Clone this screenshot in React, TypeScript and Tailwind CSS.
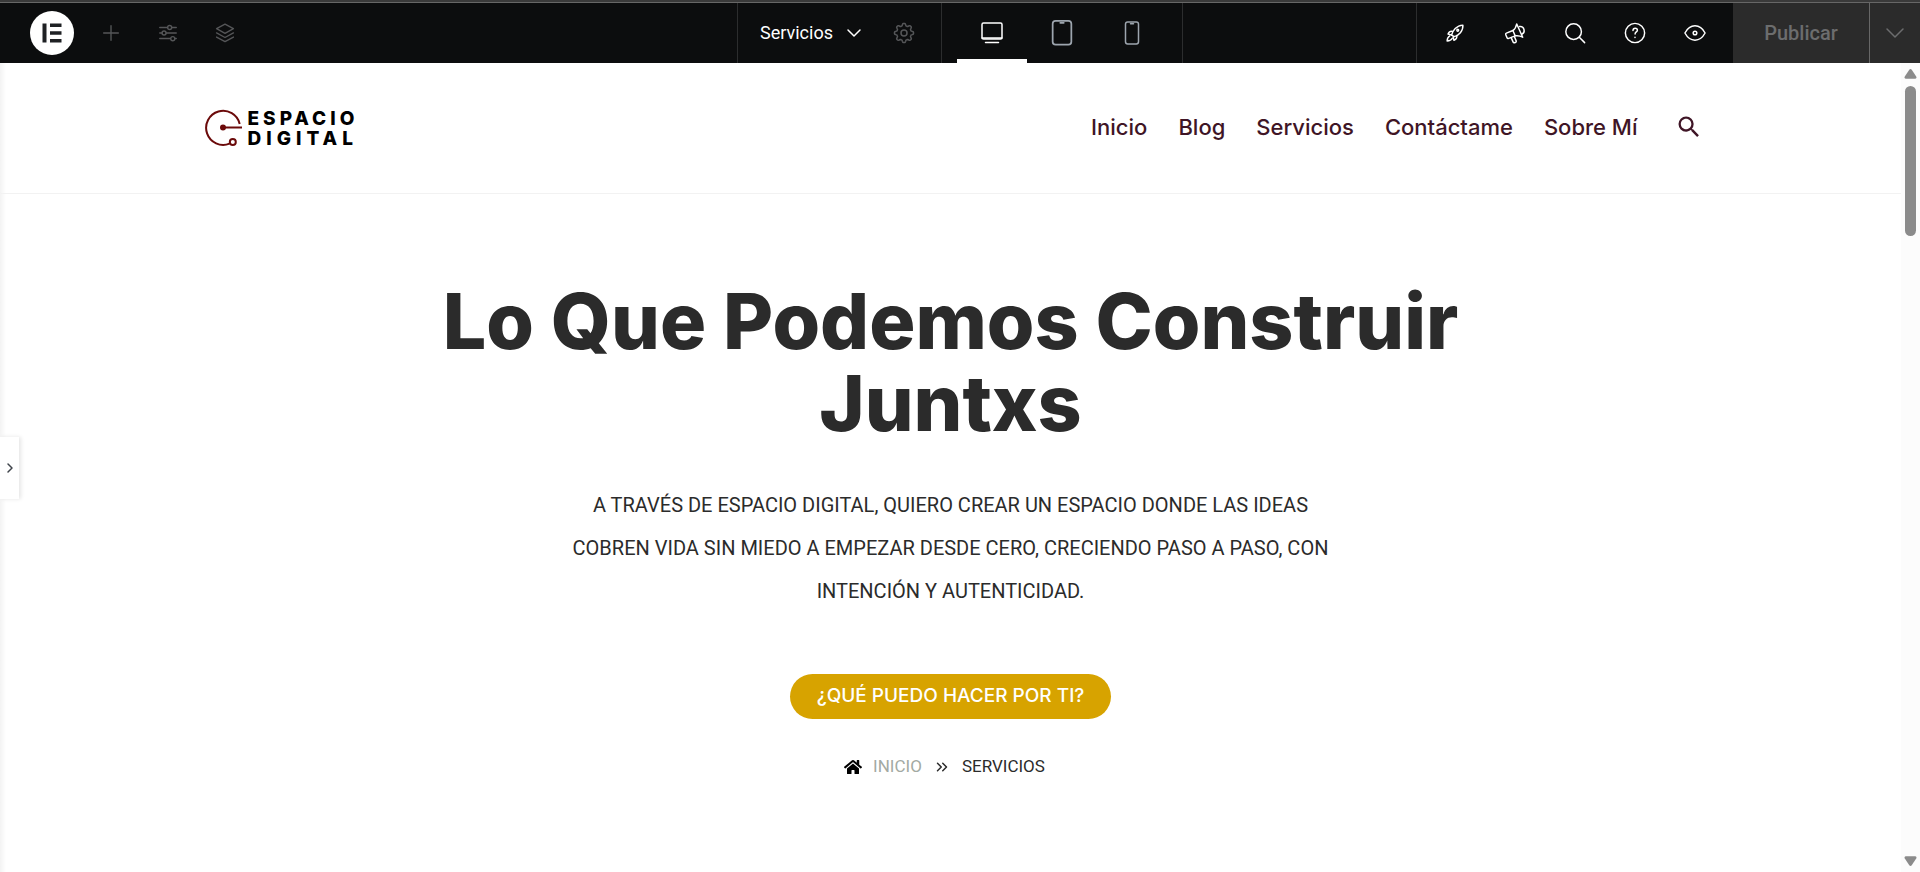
import type { ReactNode } from "react";
import { useState } from "react";
import clsx from "clsx";
import { FaHome } from "react-icons/fa";
import { FiChevronsRight } from "react-icons/fi";
import { MdSearch } from "react-icons/md";

const navLinks = ["Inicio", "Blog", "Servicios", "Contáctame", "Sobre Mí"];

function Icon({
	children,
	className,
	strokeWidth = 1.5,
}: {
	children: ReactNode;
	className?: string;
	strokeWidth?: number;
}) {
	return (
		<svg
			aria-hidden="true"
			className={clsx("shrink-0", className ?? "size-6")}
			fill="none"
			stroke="currentColor"
			strokeLinecap="round"
			strokeLinejoin="round"
			strokeWidth={strokeWidth}
			viewBox="0 0 24 24"
		>
			{children}
		</svg>
	);
}

// eight rounded teeth around the hub
const gearPath = (() => {
	const points: string[] = [];
	for (let i = 0; i < 96; i++) {
		const angle = (i / 96) * Math.PI * 2;
		const wave = Math.max(-1, Math.min(1, Math.cos(angle * 8) * 1.6));
		const radius = 8.4 + wave * 1.1;
		points.push(
			`${(12 + Math.cos(angle) * radius).toFixed(2)} ${(12 + Math.sin(angle) * radius).toFixed(2)}`,
		);
	}
	return `M${points.join("L")}Z`;
})();

const panelTools = [
	{
		label: "Añadir elemento",
		icon: <path d="M12 4v16M4 12h16" />,
	},
	{
		label: "Ajustes del sitio",
		icon: (
			<>
				<path d="M3 6h8.500M16 6h5M3 12h2.500M10 12h11M3 18h11.500M19.500 18h1.500" />
				<circle cx="13.800" cy="6" r="2.200" />
				<circle cx="7.700" cy="12" r="2.200" />
				<circle cx="17.200" cy="18.200" r="2.200" />
			</>
		),
	},
	{
		label: "Estructura",
		icon: (
			<>
				<path d="M12 2.300 2.800 7.300 12 12.300l9.200-5z" />
				<path d="m2.800 11.900 9.200 5 9.200-5" />
				<path d="m2.800 16.400 9.200 5 9.200-5" />
			</>
		),
	},
];

const devices = [
	{
		id: "desktop",
		label: "Escritorio",
		size: "size-6",
		icon: (
			<>
				<rect height="16" rx="1.500" width="20" x="2" y="2" />
				<path d="M5.500 21.500h13M2 17h20" />
			</>
		),
	},
	{
		id: "tablet",
		label: "Tableta",
		size: "size-7",
		icon: (
			<>
				<rect height="20.500" rx="2.500" width="16" x="4" y="1.500" />
				<path d="M10.500 3.300h3" />
			</>
		),
	},
	{
		id: "mobile",
		label: "Móvil",
		size: "size-6",
		icon: (
			<>
				<rect height="22" rx="2.200" width="13" x="5.500" y="1" />
				<path d="M10.500 2.800h3" />
			</>
		),
	},
];

const utilities = [
	{
		label: "Lista de lanzamiento",
		icon: (
			<>
				<path d="M8.300 14.200C9.500 9.500 13.500 3.800 20.600 3.400c.5 6.600-4.600 11.200-9.500 12.600z" />
				<path d="M9.300 10.200c-2-.4-3.900.7-4.900 3l3.900 1M13.900 14.700c.4 2-.7 4.300-3 5.300l-.9-3.700" />
				<path d="M6.300 15.200c-2 1-2.800 3-2.900 5.500 2.500 0 4.500-.9 5.600-3" />
				<circle cx="15" cy="9" r="1" />
			</>
		),
	},
	{
		label: "Novedades",
		icon: (
			<>
				<path d="M9.700 9.300 2.600 12.200c-.8.400-1 1-.7 1.700l1.500 3.400c.3.700.9.900 1.700.6l7.100-2.800z" />
				<path d="M9.700 9.300c2.200-1.400 3.500-3.700 4.200-7.200l6.500 14.500c-2.900-1.600-5.500-2-8.200-1.500" />
				<path d="M16.900 5c2.600-.6 4.500 1 5 3.600.4 2-.7 4-2.500 4.700" />
				<path d="m7.800 17 2.200 5c.3.700 1 .8 1.600.6l1.200-.5c.6-.3.700-.9.500-1.500l-2-4.800" />
			</>
		),
	},
	{
		label: "Buscador",
		icon: (
			<>
				<circle cx="10.500" cy="10.500" r="8.500" />
				<path d="m16.700 16.700 5.800 5.800" />
			</>
		),
	},
	{
		label: "Ayuda",
		icon: (
			<>
				<circle cx="12" cy="12" r="10.500" />
				<path d="M9.800 9.300c0-1.500 1-2.500 2.400-2.500s2.400 1 2.400 2.200c0 1.800-2.500 1.900-2.500 4M12 16.700v.1" />
			</>
		),
	},
	{
		label: "Vista previa",
		icon: (
			<>
				<path d="M1 12C3.800 6.800 7.500 4.200 12 4.200S20.200 6.800 23 12C20.200 17.200 16.500 19.800 12 19.800S3.800 17.200 1 12z" />
				<circle cx="12" cy="12" r="2" />
			</>
		),
	},
];

function TopBar() {
	const [device, setDevice] = useState("desktop");

	return (
		<header className="grid h-[63px] grid-cols-[1fr_auto_1fr] border-t-2 border-[#3a3a3a] bg-[#0c0d0e] font-[Roboto,sans-serif] text-white">
			<div className="flex items-center border-t border-[#676767] pl-[30px]">
				<button
					aria-label="Elementor"
					className="mr-2 flex size-11 items-center justify-center rounded-full bg-white text-[#1f2124]"
					type="button"
				>
					<svg aria-hidden="true" className="size-5" fill="currentColor" viewBox="0 0 20 20">
						<path d="M.5.500h4v19h-4zM8 .500h11.500V4H8zM8 8.200h11.500v3.600H8zM8 16h11.500v3.500H8z" />
					</svg>
				</button>
				{panelTools.map((tool) => (
					<button
						aria-label={tool.label}
						className="flex h-full w-[57px] items-center justify-center text-[#555658]"
						key={tool.label}
						type="button"
					>
						<Icon className="size-[22px]">{tool.icon}</Icon>
					</button>
				))}
			</div>

			<div className="flex border-[#676767] border-t">
				<div className="flex items-center border-[#2c2d2e] border-x">
					<button className="flex items-center gap-3 pr-[29px] pl-[22px] text-lg" type="button">
						Servicios
						<Icon className="size-[18px]" strokeWidth={2}>
							<path d="m4 8 8 8 8-8" />
						</Icon>
					</button>
					<button
						aria-label="Ajustes de la página"
						className="pr-[25px] text-[#555658]"
						type="button"
					>
						<Icon className="size-6">
							<path d={gearPath} />
							<circle cx="12" cy="12" r="3" />
						</Icon>
					</button>
				</div>
				<div className="flex border-[#2c2d2e] border-r px-[15px]">
					{devices.map((item) => (
						<button
							aria-label={item.label}
							aria-pressed={device === item.id}
							className={clsx(
								"flex w-[70px] items-center justify-center border-b-4 pt-1",
								device === item.id
									? "border-white text-white"
									: "border-transparent text-[#9da5ae]",
							)}
							key={item.id}
							onClick={() => setDevice(item.id)}
							type="button"
						>
							<Icon className={item.size}>{item.icon}</Icon>
						</button>
					))}
				</div>
			</div>

			<div className="flex justify-end border-[#676767] border-t">
				<div className="flex border-[#2c2d2e] border-l px-2">
					{utilities.map((item) => (
						<button
							aria-label={item.label}
							className="flex w-[60px] items-center justify-center"
							key={item.label}
							type="button"
						>
							<Icon className="size-[22px]" strokeWidth={1.6}>
								{item.icon}
							</Icon>
						</button>
					))}
				</div>
				<button
					className="w-[136px] bg-[#2b2b2b] font-medium text-[#6c6d6e] text-xl"
					type="button"
				>
					Publicar
				</button>
				<button
					aria-label="Opciones de guardado"
					className="flex w-[51px] items-center justify-center border-[#676767] border-l bg-[#2b2b2b] text-[#6c6d6e]"
					type="button"
				>
					<Icon className="size-6">
						<path d="m4 8 8 8 8-8" />
					</Icon>
				</button>
			</div>
		</header>
	);
}

function Logo() {
	return (
		<a aria-label="Espacio Digital" className="flex items-center gap-1.5" href="#inicio">
			<svg
				aria-hidden="true"
				className="size-[37px]"
				fill="none"
				stroke="#6b0a0a"
				strokeWidth="2"
				viewBox="0 0 37 37"
			>
				<path d="M34.700 15A17 17 0 1 0 24.500 34.600" />
				<path d="M18 18.500h19" />
				<circle cx="18" cy="18.500" fill="#6b0a0a" r="2" />
				<circle cx="27.800" cy="33" r="3" />
			</svg>
			<span className="flex flex-col pt-1 font-extrabold text-[19px] text-black leading-5">
				<span className="tracking-[4px]">ESPACIO</span>
				<span className="tracking-[5px]">DIGITAL</span>
			</span>
		</a>
	);
}

function SiteHeader() {
	return (
		<div className="border-[#f2f2f2] border-b">
			<div className="mx-auto flex h-[130px] max-w-[1504px] items-center justify-between pb-0.5 pl-1.5">
				<Logo />
				<nav className="flex items-center gap-[31px] font-medium text-[#3f1526] text-[22px]">
					{navLinks.map((link) => (
						<a href="#inicio" key={link}>
							{link}
						</a>
					))}
					<button aria-label="Buscar" className="pl-1.5" type="button">
						<MdSearch className="size-7" />
					</button>
				</nav>
			</div>
		</div>
	);
}

function Hero() {
	return (
		<section className="flex flex-col items-center px-6 pt-[86px] text-[#2b2b2b]">
			<h1 className="max-w-[1150px] text-center font-extrabold text-[77px] leading-[82px]">
				Lo Que Podemos Construir Juntxs
			</h1>
			<p className="mt-10 max-w-[780px] text-center font-[Roboto,sans-serif] text-xl uppercase leading-[43px]">
				A través de Espacio Digital, quiero crear un espacio donde las ideas cobren vida sin
				miedo a empezar desde cero, creciendo paso a paso, con intención y autenticidad.
			</p>
			<a
				className="mt-[61px] flex h-[45px] items-center rounded-full bg-[#d7a300] px-[27px] font-medium text-[19px] text-white"
				href="#servicios"
			>
				¿QUÉ PUEDO HACER POR TI?
			</a>
			<nav
				aria-label="Migas de pan"
				className="mt-[35px] flex items-center gap-[11px] pr-3 font-[Roboto,sans-serif] text-[17px] uppercase"
			>
				<FaHome className="size-[18px] text-black" />
				<a className="text-[#a3aaa3]" href="#inicio">
					Inicio
				</a>
				<FiChevronsRight className="size-[18px]" />
				<span>Servicios</span>
			</nav>
		</section>
	);
}

function Scrollbar() {
	return (
		<div
			aria-hidden="true"
			className="flex w-[19px] shrink-0 flex-col items-center bg-[#fcfcfc] py-[5px] text-[#8b8b8b]"
		>
			<svg className="h-3 w-[13px]" fill="currentColor" viewBox="0 0 13 12">
				<path d="M6.500 1c.6 0 1 .4 1.400 1l4.300 6.600c.7 1.200.2 2.200-1.100 2.200H1.900C.6 10.800.1 9.800.8 8.600L5.100 2c.4-.6.800-1 1.400-1z" />
			</svg>
			<div className="mt-1.5 h-[150px] w-[11px] rounded-full bg-[#8b8b8b]" />
			<svg className="mt-auto h-3 w-[13px] rotate-180" fill="currentColor" viewBox="0 0 13 12">
				<path d="M6.500 1c.6 0 1 .4 1.400 1l4.300 6.600c.7 1.200.2 2.200-1.100 2.200H1.900C.6 10.800.1 9.800.8 8.600L5.100 2c.4-.6.800-1 1.400-1z" />
			</svg>
		</div>
	);
}

export default function App() {
	return (
		<div className="flex min-h-screen flex-col bg-white font-[Inter,sans-serif]">
			<TopBar />
			<div className="relative flex grow">
				<main className="grow">
					<SiteHeader />
					<Hero />
				</main>
				<Scrollbar />
				<div className="pointer-events-none absolute inset-y-0 left-0 w-1.5 bg-linear-to-r from-[#f3f3f3] to-transparent" />
				<button
					aria-label="Mostrar panel"
					className="absolute top-1/2 left-0 flex h-[62px] w-[19px] -translate-y-1/2 items-center justify-center bg-white text-[#3f444b] shadow-[2px_0_4px_rgba(0,0,0,0.1)]"
					type="button"
				>
					<Icon className="size-3" strokeWidth={3}>
						<path d="m8 4 8 8-8 8" />
					</Icon>
				</button>
			</div>
		</div>
	);
}
